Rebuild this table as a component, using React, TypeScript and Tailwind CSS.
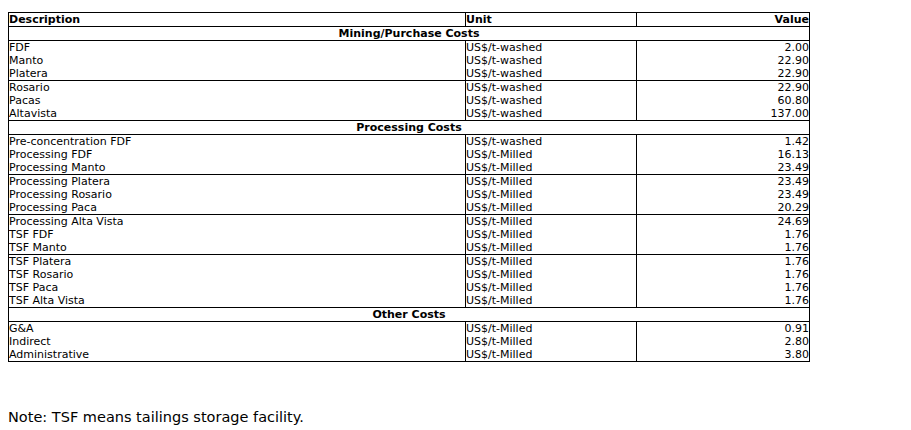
type Row = { d: string; u: string; v: string }
type Block = { section?: string; groups: Row[][] }

const W = 'US$/t-washed'
const M = 'US$/t-Milled'

const blocks: Block[] = [
  {
    section: 'Mining/Purchase Costs',
    groups: [
      [
        { d: 'FDF', u: W, v: '2.00' },
        { d: 'Manto', u: W, v: '22.90' },
        { d: 'Platera', u: W, v: '22.90' },
      ],
      [
        { d: 'Rosario', u: W, v: '22.90' },
        { d: 'Pacas', u: W, v: '60.80' },
        { d: 'Altavista', u: W, v: '137.00' },
      ],
    ],
  },
  {
    section: 'Processing Costs',
    groups: [
      [
        { d: 'Pre-concentration FDF', u: W, v: '1.42' },
        { d: 'Processing FDF', u: M, v: '16.13' },
        { d: 'Processing Manto', u: M, v: '23.49' },
      ],
      [
        { d: 'Processing Platera', u: M, v: '23.49' },
        { d: 'Processing Rosario', u: M, v: '23.49' },
        { d: 'Processing Paca', u: M, v: '20.29' },
      ],
      [
        { d: 'Processing Alta Vista', u: M, v: '24.69' },
        { d: 'TSF FDF', u: M, v: '1.76' },
        { d: 'TSF Manto', u: M, v: '1.76' },
      ],
      [
        { d: 'TSF Platera', u: M, v: '1.76' },
        { d: 'TSF Rosario', u: M, v: '1.76' },
        { d: 'TSF Paca', u: M, v: '1.76' },
        { d: 'TSF Alta Vista', u: M, v: '1.76' },
      ],
    ],
  },
  {
    section: 'Other Costs',
    groups: [
      [
        { d: 'G&A', u: M, v: '0.91' },
        { d: 'Indirect', u: M, v: '2.80' },
        { d: 'Administrative', u: M, v: '3.80' },
      ],
    ],
  },
]

const cols = 'grid grid-cols-[456px_171px_173px]'

export default function App() {
  return (
    <div className="min-h-[430px] bg-white p-2 pt-3 font-['DejaVu_Sans',Verdana,sans-serif] text-black">
      <div className="w-[802px] border border-black text-[11px] leading-[13px]">
        <div className={`${cols} h-[13px] font-bold`}>
          <div className="whitespace-nowrap">Description</div>
          <div className="whitespace-nowrap border-l border-black">Unit</div>
          <div className="whitespace-nowrap border-l border-black text-right">Value</div>
        </div>
        {blocks.map((b) => (
          <div key={b.section}>
            <div className="h-[13px] box-content border-t border-black text-center font-bold">{b.section}</div>
            {b.groups.map((g, gi) => (
              <div key={gi} className="border-t border-black">
                {g.map((r) => (
                  <div key={r.d} className={`${cols} h-[13px]`}>
                    <div className="whitespace-nowrap">{r.d}</div>
                    <div className="whitespace-nowrap border-l border-black">{r.u}</div>
                    <div className="whitespace-nowrap border-l border-black text-right">{r.v}</div>
                  </div>
                ))}
              </div>
            ))}
          </div>
        ))}
      </div>
      <p className="mt-[47px] text-[14.5px] leading-[16px]">Note: TSF means tailings storage facility.</p>
    </div>
  )
}
